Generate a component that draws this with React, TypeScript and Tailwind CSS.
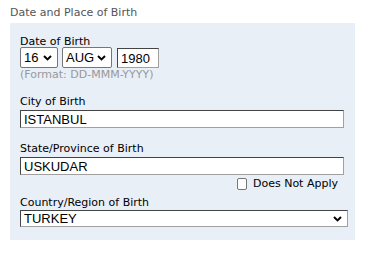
const label = "block text-[11px] leading-[12px] h-[12px] text-black";
const field =
  "block h-[18px] bg-white border border-t-[#444] border-l-[#444] border-r-[#a0a0a0] border-b-[#a0a0a0] px-[3px] text-[13px] leading-[16px] text-black outline-none";
const sans = { fontFamily: '"Liberation Sans", Arial, sans-serif' };

function Chevron({ className }: { className: string }) {
  return (
    <svg width="9" height="6" viewBox="0 0 9 6" className={`absolute pointer-events-none ${className}`}>
      <path d="M1 1 L4.5 4.5 L8 1" fill="none" stroke="#000" strokeWidth="1.9" />
    </svg>
  );
}

function Select({ value, width, options }: { value: string; width: string; options: string[] }) {
  return (
    <div className={`relative ${width} h-[21px]`}>
      <select
        defaultValue={value}
        className="block w-full h-full appearance-none bg-white border border-[#767676] rounded-[2px] pl-[3px] pr-[16px] text-[13px] leading-[19px] text-black outline-none"
        style={sans}
      >
        {options.map(o => (
          <option key={o}>{o}</option>
        ))}
      </select>
      <Chevron className="right-[6px] top-[8px]" />
    </div>
  );
}

export default function App() {
  return (
    <div className="w-[366px] h-[253px] bg-white pl-[10px] pt-[6px]" style={{ fontFamily: '"DejaVu Sans", Verdana, sans-serif' }}>
      <h3 className="text-[11px] leading-[14px] h-[14px] text-[#555]">Date and Place of Birth</h3>

      <div className="mt-[3px] w-[345px] h-[217px] bg-[#e8eff7] pl-[10px] pt-[13px] flex flex-col">
        <span className={label}>Date of Birth</span>
        <div className="flex items-start gap-[4px] mt-[-1px] h-[21px]">
          <Select value="16" width="w-[38px]" options={["15", "16", "17"]} />
          <Select value="AUG" width="w-[50px]" options={["JUL", "AUG", "SEP"]} />
          <input defaultValue="1980" className={`${field} w-[42px] !h-[20px] ml-[1px] mt-[1px]`} style={sans} />
        </div>
        <p className="text-[11px] leading-[13px] h-[13px] text-[#999]">(Format: DD-MMM-YYYY)</p>

        <span className={`${label} mt-[15px]`}>City of Birth</span>
        <input defaultValue="ISTANBUL" className={`${field} w-[324px] mt-[2px]`} style={sans} />

        <span className={`${label} mt-[15px]`}>State/Province of Birth</span>
        <input defaultValue="USKUDAR" className={`${field} w-[324px] mt-[2px]`} style={sans} />

        <div className="flex justify-end items-center w-[324px] h-[12px] mt-[3px] gap-[6px] pr-[6px]">
          <input type="checkbox" className="appearance-none w-[10px] h-[12px] bg-white border border-[#767676] rounded-[2px]" />
          <span className="text-[11px] leading-[12px] text-black">Does Not Apply</span>
        </div>

        <span className={`${label} mt-[7px]`}>Country/Region of Birth</span>
        <div className="relative w-[328px] h-[17px] mt-[1px]">
          <select
            defaultValue="TURKEY"
            className="block w-full h-full appearance-none bg-white border border-t-[#444] border-l-[#444] border-r-[#a0a0a0] border-b-[#a0a0a0] pl-[3px] text-[13px] leading-[15px] text-black outline-none"
            style={sans}
          >
            <option>TURKEY</option>
            <option>GREECE</option>
          </select>
          <Chevron className="right-[6px] top-[6px]" />
        </div>
      </div>
    </div>
  );
}
